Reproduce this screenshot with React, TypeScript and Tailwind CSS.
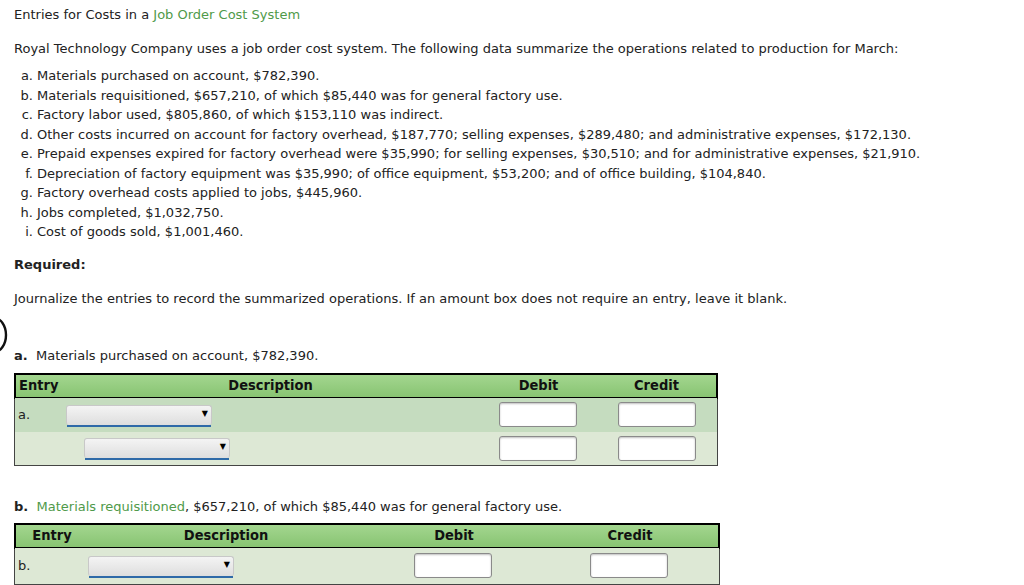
const items: string[] = [
  "Materials purchased on account, $782,390.",
  "Materials requisitioned, $657,210, of which $85,440 was for general factory use.",
  "Factory labor used, $805,860, of which $153,110 was indirect.",
  "Other costs incurred on account for factory overhead, $187,770; selling expenses, $289,480; and administrative expenses, $172,130.",
  "Prepaid expenses expired for factory overhead were $35,990; for selling expenses, $30,510; and for administrative expenses, $21,910.",
  "Depreciation of factory equipment was $35,990; of office equipment, $53,200; and of office building, $104,840.",
  "Factory overhead costs applied to jobs, $445,960.",
  "Jobs completed, $1,032,750.",
  "Cost of goods sold, $1,001,460.",
];
const letters = ["a", "b", "c", "d", "e", "f", "g", "h", "i"];

const Select = ({ className = "" }: { className?: string }) => (
  <div
    className={`relative h-[20px] w-[146px] rounded-[3px] border border-[#c8c8c8] border-b-0 bg-gradient-to-b from-[#f4f4f4] to-[#dedede] ${className}`}
  >
    <div className="absolute bottom-[-2px] left-0 right-0 h-[2px] bg-[#2f6aa8]" />
    <span className="absolute right-[3px] top-[4px] text-[8px] leading-none text-black">▼</span>
  </div>
);

const Amount = () => (
  <div className="h-[25px] w-[78px] rounded-[3px] border border-[#8a8a8a] bg-white shadow-[inset_0_1px_2px_rgba(0,0,0,0.25)]" />
);

const headerCls =
  "grid h-[26px] items-center border-2 border-black bg-gradient-to-b from-[#a3d68f] to-[#88c472] text-[14.5px] font-bold text-[#111]";
const condensed = { fontFamily: '"DejaVu Sans Condensed", "DejaVu Sans", sans-serif' };

export default function App() {
  return (
    <div
      className="relative h-[585px] w-[1024px] overflow-hidden bg-white pl-[14px] text-[13px] text-[#222]"
      style={{ fontFamily: '"DejaVu Sans", Verdana, sans-serif' }}
    >
      <svg className="absolute left-0 top-[317px]" width="8" height="36" viewBox="0 0 8 36">
        <path d="M-6 1 A 12 17 0 0 1 -6 35" fill="none" stroke="#111" strokeWidth="2.4" />
      </svg>

      <p className="pt-[6px] leading-[18px]">
        Entries for Costs in a <span className="text-[#4f9a4a]">Job Order Cost System</span>
      </p>

      <p className="mt-[16px] leading-[18px]">
        Royal Technology Company uses a job order cost system. The following data summarize the operations related to production for March:
      </p>

      <div className="mt-[8px] flex flex-col">
        {items.map((t, i) => (
          <div key={i} className="flex h-[19.5px] items-center">
            <span className="w-[19px] text-right">{letters[i]}.</span>
            <span className="ml-[4px]">{t}</span>
          </div>
        ))}
      </div>

      <p className="mt-[14px] font-bold leading-[18px]">Required:</p>

      <p className="mt-[16px] leading-[18px]">
        Journalize the entries to record the summarized operations. If an amount box does not require an entry, leave it blank.
      </p>

      <p className="mt-[39px] leading-[18px]">
        <span className="font-bold">a.</span>&nbsp; Materials purchased on account, $782,390.
      </p>

      <div className="mt-[8px] w-[704px] border border-[#444]">
        <div className={`${headerCls} -m-px grid-cols-[45px_419px_117px_1fr]`} style={condensed}>
          <span className="pl-[3px]">Entry</span>
          <span className="text-center">Description</span>
          <span className="text-center">Debit</span>
          <span className="text-center">Credit</span>
        </div>
        <div className="grid h-[34px] grid-cols-[45px_419px_117px_1fr] items-center bg-[#c5dcbf]">
          <span className="pl-[3px]">a.</span>
          <Select className="ml-[6px]" />
          <div className="flex justify-center"><Amount /></div>
          <div className="flex justify-center"><Amount /></div>
        </div>
        <div className="grid h-[33px] grid-cols-[45px_419px_117px_1fr] items-center bg-[#dde8d5]">
          <span />
          <Select className="ml-[24px]" />
          <div className="flex justify-center"><Amount /></div>
          <div className="flex justify-center"><Amount /></div>
        </div>
      </div>

      <p className="mt-[32px] leading-[18px]">
        <span className="font-bold">b.</span>&nbsp; <span className="text-[#4f9a4a]">Materials requisitioned</span>, $657,210, of which $85,440 was for general factory use.
      </p>

      <div className="mt-[7px] w-[706px] border border-[#444]">
        <div className={`${headerCls} -m-px grid-cols-[72px_276px_180px_172px_1fr]`} style={condensed}>
          <span className="text-center">Entry</span>
          <span className="text-center">Description</span>
          <span className="text-center">Debit</span>
          <span className="text-center">Credit</span>
          <span />
        </div>
        <div className="grid h-[36px] grid-cols-[72px_276px_180px_172px_1fr] items-center bg-[#dde8d5]">
          <span className="pl-[3px]">b.</span>
          <Select className="ml-[1px]" />
          <div className="flex justify-center"><Amount /></div>
          <div className="flex justify-center"><Amount /></div>
          <span />
        </div>
      </div>
    </div>
  );
}
